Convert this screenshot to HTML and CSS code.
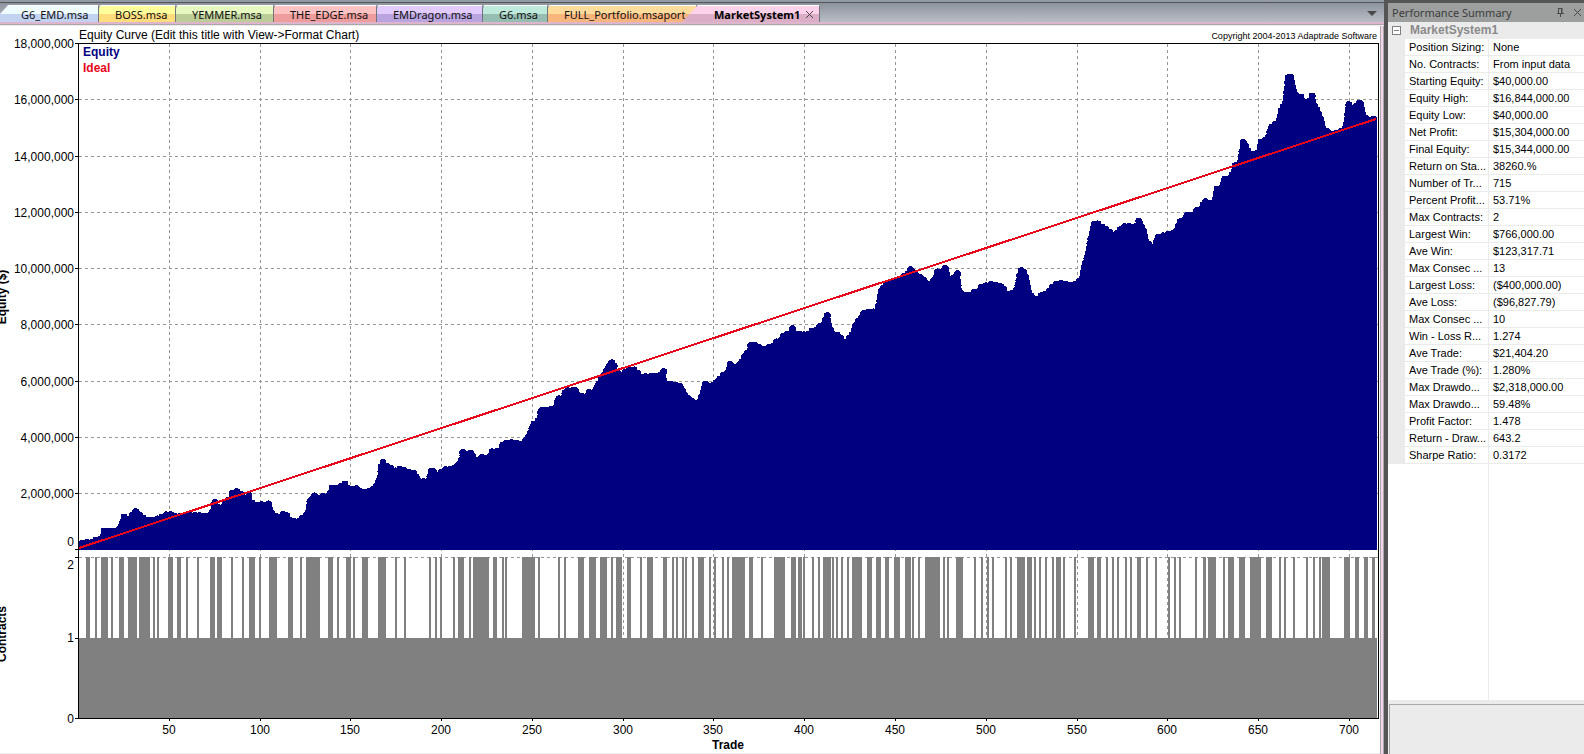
FILE: index.html
```html
<!DOCTYPE html>
<html lang="en">
<head>
    <meta charset="UTF-8">
    <meta name="viewport" content="width=device-width, initial-scale=1.0">
    <title>MarketSystem1</title>
    <link rel="stylesheet" href="styles.css">
</head>
<body>
    <div class="window">
        <main class="document">
            <nav class="tabs">
                <button class="tab blue">G6_EMD.msa</button>
                <button class="tab yellow">BOSS.msa</button>
                <button class="tab green">YEMMER.msa</button>
                <button class="tab red">THE_EDGE.msa</button>
                <button class="tab purple">EMDragon.msa</button>
                <button class="tab teal">G6.msa</button>
                <button class="tab orange">FULL_Portfolio.msaport</button>
                <div class="tab active">
                    <button class="tab-name">MarketSystem1</button>
                    <button class="icon-btn" aria-label="Close tab">
                        <svg width="9" height="9" viewBox="0 0 9 9"><path d="M1 1l7 7M8 1l-7 7"/></svg>
                    </button>
                </div>
                <button class="icon-btn tab-menu" aria-label="Tab list">
                    <svg width="10" height="5" viewBox="0 0 10 5"><path class="solid" d="M0 0h10l-5 5z"/></svg>
                </button>
            </nav>
            <svg class="chart" id="chart" viewBox="0 26 1380 728">
                <text class="label" x="79" y="39">Equity Curve (Edit this title with View-&gt;Format Chart)</text>
                <text class="copyright end" x="1377" y="39">Copyright 2004-2013 Adaptrade Software</text>
                <g id="grid"></g>
                <g id="bars" class="bars"></g>
                <path id="equity" class="equity"/>
                <path id="bumps" class="bumps"/>
                <path class="ideal" d="M79 548L1376 119"/>
                <path class="axis" d="M75 43.500H1378.500V718.500M78.500 43V719M75 718.500H1379"/>
                <g id="labels" class="label"></g>
                <text class="legend legend-equity" x="83" y="56">Equity</text>
                <text class="legend legend-ideal" x="83" y="72">Ideal</text>
                <text class="legend middle" x="728" y="749">Trade</text>
                <text class="legend middle" transform="translate(6 297) rotate(-90)">Equity ($)</text>
                <text class="legend middle" transform="translate(6 634) rotate(-90)">Contracts</text>
                <path class="bottom-line" d="M0 753.500H1380"/>
            </svg>
        </main>
        <aside class="summary">
            <header class="summary-title">
                <h1>Performance Summary</h1>
                <button class="icon-btn" aria-label="Pin">
                    <svg width="9" height="9" viewBox="0 0 9 9"><path d="M2.500 0v5M2 .5h4M6 0v5M5.500 0v5M1 5.500h7M4.500 6v3"/></svg>
                </button>
                <button class="icon-btn" aria-label="Close">
                    <svg width="9" height="9" viewBox="0 0 9 9"><path d="M1 1l7 7M8 1l-7 7"/></svg>
                </button>
            </header>
            <div class="summary-body">
                <div class="group">
                    <button class="icon-btn toggle" aria-label="Collapse">
                        <svg width="9" height="9" viewBox="0 0 9 9"><rect x=".5" y=".5" width="8" height="8"/><path d="M2 4.500h5"/></svg>
                    </button>
                    <h2>MarketSystem1</h2>
                </div>
                <table>
                    <tbody>
                        <tr><th scope="row">Position Sizing:</th><td>None</td></tr>
                        <tr><th scope="row">No. Contracts:</th><td>From input data</td></tr>
                        <tr><th scope="row">Starting Equity:</th><td>$40,000.00</td></tr>
                        <tr><th scope="row">Equity High:</th><td>$16,844,000.00</td></tr>
                        <tr><th scope="row">Equity Low:</th><td>$40,000.00</td></tr>
                        <tr><th scope="row">Net Profit:</th><td>$15,304,000.00</td></tr>
                        <tr><th scope="row">Final Equity:</th><td>$15,344,000.00</td></tr>
                        <tr><th scope="row">Return on Sta...</th><td>38260.%</td></tr>
                        <tr><th scope="row">Number of Tr...</th><td>715</td></tr>
                        <tr><th scope="row">Percent Profit...</th><td>53.71%</td></tr>
                        <tr><th scope="row">Max Contracts:</th><td>2</td></tr>
                        <tr><th scope="row">Largest Win:</th><td>$766,000.00</td></tr>
                        <tr><th scope="row">Ave Win:</th><td>$123,317.71</td></tr>
                        <tr><th scope="row">Max Consec ...</th><td>13</td></tr>
                        <tr><th scope="row">Largest Loss:</th><td>($400,000.00)</td></tr>
                        <tr><th scope="row">Ave Loss:</th><td>($96,827.79)</td></tr>
                        <tr><th scope="row">Max Consec ...</th><td>10</td></tr>
                        <tr><th scope="row">Win - Loss R...</th><td>1.274</td></tr>
                        <tr><th scope="row">Ave Trade:</th><td>$21,404.20</td></tr>
                        <tr><th scope="row">Ave Trade (%):</th><td>1.280%</td></tr>
                        <tr><th scope="row">Max Drawdo...</th><td>$2,318,000.00</td></tr>
                        <tr><th scope="row">Max Drawdo...</th><td>59.48%</td></tr>
                        <tr><th scope="row">Profit Factor:</th><td>1.478</td></tr>
                        <tr><th scope="row">Return - Draw...</th><td>643.2</td></tr>
                        <tr><th scope="row">Sharpe Ratio:</th><td>0.3172</td></tr>
                    </tbody>
                </table>
                <div class="empty"></div>
            </div>
            <div class="description"></div>
        </aside>
    </div>
    <script src="script.js"></script>
</body>
</html>
```
FILE: styles.css
```css
* {
    box-sizing: border-box;
}

body {
    margin: 0;
    overflow: hidden;
    background: #fff;
    font-family: "Liberation Sans", Arial, sans-serif;
}

button {
    margin: 0;
    padding: 0;
    border: none;
    background: none;
    color: inherit;
    font: inherit;
    cursor: pointer;
}

.window {
    display: flex;
    height: 100vh;
    overflow: hidden;
}

/* document area */
.document {
    flex: 1;
    min-width: 0;
    display: flex;
    flex-direction: column;
    box-shadow: inset -1px 0 #a8a8a8, inset -3px 0 #f5d5ee, inset -4px 0 #a8a8a8;
    padding-right: 4px;
    background: #fff;
}

.tabs {
    display: flex;
    flex: none;
    height: 26px;
    margin-right: -4px;
    padding-top: 3px;
    border-top: 2px solid #919ba5;
    background: linear-gradient(#555 0 1px, #8d939d 1px, #b9bec6 20px, #ddb6cd 20px 22px, #a8a8a8 22px 23px, #f0e8ee 23px);
    font-family: "Noto Sans", "Open Sans", sans-serif;
    font-size: 11px;
    line-height: 15px;
    color: #111;
}

.tab {
    flex: none;
    height: 17px;
    padding-left: 16px;
    border-left: 1px solid #70757c;
    border-top: 1px solid #fff;
    border-top-left-radius: 4px;
    text-align: left;
    white-space: nowrap;
}

.blue {
    width: 98px;
    padding-left: 21px;
    border-left: none;
    background: linear-gradient(#eefbff 50%, #c2d2f0 50%);
    clip-path: polygon(8px 0, 100% 0, 100% 100%, 0 100%, 0 9px);
}

.yellow {
    width: 77px;
    background: linear-gradient(#ffff9c 50%, #ffdc7c 50%);
}

.green {
    width: 98px;
    background: linear-gradient(#e6f8c0 50%, #bccd98 50%);
}

.red {
    width: 103px;
    background: linear-gradient(#ffc2c2 50%, #ee9c9c 50%);
}

.purple {
    width: 106px;
    background: linear-gradient(#e2ccff 50%, #b9a4e0 50%);
}

.teal {
    width: 65px;
    background: linear-gradient(#bdeadb 50%, #96bdb1 50%);
}

.orange {
    width: 149px;
    background: linear-gradient(#ffdb9c 50%, #f8b57c 50%);
}

.active {
    display: flex;
    align-items: center;
    justify-content: space-between;
    width: 138px;
    margin-left: -14px;
    padding: 0 5px 0 32px;
    border-left: none;
    border-right: 1px solid #70757c;
    background: linear-gradient(#ffd2ec 50%, #dbaec6 50%);
    clip-path: polygon(16px 0, 100% 0, 100% 100%, 0 100%);
    color: #000;
}

.tab-name {
    font-weight: bold;
}

.icon-btn {
    display: flex;
    align-items: center;
    flex: none;
}

.icon-btn svg {
    fill: none;
    stroke: #4a4a4a;
}

.icon-btn .solid {
    fill: #4a4a4a;
    stroke: none;
}

.tab-menu {
    height: 17px;
    margin-left: auto;
    margin-right: 7px;
}

/* chart */
.chart {
    display: block;
    width: 100%;
    flex: none;
    font-size: 12px;
    fill: #000;
}

.chart path,
.bars rect {
    shape-rendering: crispEdges;
}

.end {
    text-anchor: end;
}

.middle {
    text-anchor: middle;
}

.copyright {
    font-size: 9px;
}

.legend {
    font-weight: bold;
}

.legend-equity {
    fill: #000080;
}

.legend-ideal {
    fill: #e8061b;
}

.gridline {
    stroke: #969696;
    stroke-dasharray: 3 3;
}

.axis,
.tick {
    fill: none;
    stroke: #000;
}

.bars {
    fill: #808080;
}

.equity {
    fill: #000080;
}

.bumps {
    fill: none;
    stroke: #000080;
    stroke-width: 7;
    stroke-linecap: round;
    stroke-dasharray: 0 5;
}

.ideal {
    stroke: #e8061b;
    stroke-width: 2;
}

.bottom-line {
    stroke: #ebebeb;
}

/* performance summary */
.summary {
    display: flex;
    flex-direction: column;
    flex: none;
    width: 200px;
    border-left: 4px solid #555;
    background: #ebebeb;
    font-size: 11px;
    color: #000;
}

.summary-title {
    display: flex;
    align-items: center;
    gap: 8px;
    flex: none;
    height: 22px;
    padding: 0 2px 0 4px;
    border-top: 3px solid #555;
    background: #9c9f9e;
    font-family: "Noto Sans", "Open Sans", sans-serif;
}

.summary-title h1 {
    flex: 1;
    margin: 0;
    font-size: 11px;
    font-weight: normal;
    line-height: 15px;
    color: #3c3c3c;
}

.summary-body {
    flex: 1;
    min-height: 0;
    display: flex;
    flex-direction: column;
}

.group {
    display: flex;
    align-items: center;
    gap: 9px;
    flex: none;
    height: 17px;
    padding-left: 4px;
}

.toggle svg {
    fill: #fff;
    stroke: #808080;
}

.group h2 {
    margin: 0;
    font-size: 12px;
    line-height: 15px;
    color: #8a8a8a;
}

table {
    width: 100%;
    border-collapse: separate;
    border-spacing: 0;
    table-layout: fixed;
}

th,
td {
    height: 17px;
    padding: 0 0 0 4px;
    border-bottom: 1px solid #ebebeb;
    background: #fff;
    font-weight: normal;
    line-height: 16px;
    text-align: left;
    white-space: nowrap;
}

th {
    width: 101px;
    border-left: 17px solid #ebebeb;
    border-right: 1px solid #ebebeb;
}

.empty {
    flex: 1;
    background: linear-gradient(#ebebeb, #ebebeb) 100px 0 / 1px 100% no-repeat #fff;
}

.description {
    flex: none;
    height: 50px;
    margin: 4px 0 0 1px;
    border-top: 1px solid #a8a8a8;
    border-left: 1px solid #a8a8a8;
}
```
FILE: script.js
```js
// top outline of the equity area, as x,y pairs
const equity = [
    79,540, 82,539, 92,539, 96,536, 100,537, 101,529, 105,527, 110,528, 116,528, 119,523, 121,515, 123,514,
    128,516, 131,511, 135,508, 140,510, 143,514, 148,517, 152,517, 158,515, 163,513, 168,510, 173,512, 177,514,
    183,512, 197,512, 208,513, 211,508, 212,501, 215,500, 218,505, 222,505, 223,499, 229,497, 230,490, 235,488,
    241,489, 245,495, 247,496, 248,493, 251,493, 252,498, 255,502, 263,501, 267,502, 270,500, 272,503, 273,510,
    278,515, 284,510, 289,513, 292,518, 297,519, 301,515, 305,513, 307,498, 310,497, 313,492, 318,495, 323,493,
    327,494, 330,485, 337,485, 343,481, 347,481, 350,487, 358,485, 363,490, 368,488, 373,486, 377,477, 378,465,
    382,459, 388,463, 397,468, 401,465, 406,468, 415,470, 419,475, 421,479, 426,479, 428,470, 432,466, 436,469,
    437,475, 441,467, 452,466, 457,462, 461,451, 463,449, 468,452, 472,449, 475,453, 477,459, 480,454, 487,456,
    490,449, 499,448, 501,441, 510,439, 522,441, 527,433, 530,423, 537,418, 538,407, 544,408, 554,405, 555,397,
    562,395, 563,388, 573,387, 577,386, 580,393, 585,394, 588,389, 592,390, 597,380, 602,372, 608,361, 613,359,
    617,362, 618,371, 622,373, 624,368, 633,366, 638,368, 642,374, 650,373, 658,373, 663,368, 666,371, 667,382,
    673,381, 683,384, 687,393, 693,398, 696,402, 700,392, 703,381, 708,385, 712,382, 717,377, 722,372, 726,371,
    727,363, 730,361, 735,366, 739,360, 743,352, 747,350, 748,343, 754,341, 763,346, 772,343, 775,338, 779,338,
    782,332, 789,331, 792,325, 795,330, 807,332, 810,328, 816,327, 817,324, 822,322, 823,316, 827,312, 830,315,
    832,325, 835,332, 842,333, 844,341, 848,335, 851,330, 853,322, 858,317, 863,309, 875,309, 877,298, 878,287,
    882,286, 883,283, 888,280, 897,277, 905,272, 908,267, 911,265, 914,268, 918,273, 925,276, 929,283, 933,276,
    936,268, 941,271, 942,266, 946,264, 949,268, 950,276, 954,277, 955,271, 959,271, 961,280, 962,291, 969,293,
    972,289, 977,289, 980,284, 991,281, 1000,283, 1006,285, 1007,293, 1013,290, 1015,283, 1017,271, 1022,266,
    1027,271, 1030,280, 1032,292, 1036,298, 1040,292, 1045,291, 1052,282, 1060,280, 1073,282, 1079,278, 1081,265,
    1085,253, 1087,240, 1090,227, 1092,221, 1097,219, 1102,223, 1110,228, 1114,233, 1118,227, 1126,222, 1135,225,
    1136,219, 1139,217, 1143,222, 1147,230, 1149,241, 1153,246, 1155,235, 1168,231, 1173,231, 1177,220, 1183,217,
    1186,211, 1193,213, 1194,208, 1200,206, 1203,198, 1212,202, 1214,187, 1220,186, 1222,177, 1228,176, 1232,168,
    1233,162, 1237,164, 1238,153, 1241,143, 1244,139, 1249,145, 1252,152, 1256,152, 1258,140, 1265,137, 1268,126,
    1277,118, 1278,108, 1282,103, 1284,87, 1285,75, 1289,72, 1294,76, 1296,88, 1298,93, 1303,94, 1306,100,
    1308,100, 1310,93, 1315,94, 1316,102, 1321,110, 1324,118, 1326,127, 1332,131, 1342,128, 1344,118, 1345,105,
    1349,101, 1353,105, 1357,102, 1360,98, 1364,103, 1366,113, 1370,118, 1374,117, 1376,115
];

// start,end of every stretch traded with 2 contracts
const doubles = [
    86,90, 95,97, 101,108, 111,113, 119,124, 128,137, 139,150, 153,155, 157,159, 168,173, 177,181, 186,188,
    197,199, 210,215, 217,222, 231,233, 242,244, 249,255, 259,261, 269,277, 288,293, 300,302, 306,320, 328,333,
    337,339, 346,351, 353,355, 362,368, 378,386, 395,397, 404,406, 429,431, 435,437, 440,442, 453,455, 458,464,
    469,471, 473,489, 493,497, 502,504, 505,507, 522,535, 538,540, 558,560, 564,566, 578,584, 589,596, 600,607,
    611,613, 616,622, 627,631, 640,642, 647,653, 663,667, 672,674, 676,678, 682,684, 685,687, 692,694, 698,704,
    709,711, 714,716, 722,724, 727,729, 732,745, 749,753, 761,763, 774,785, 791,796, 798,802, 803,805, 812,814,
    818,820, 823,831, 832,834, 836,838, 841,843, 847,849, 852,862, 867,872, 876,881, 885,889, 894,900, 905,911,
    912,914, 918,920, 925,940, 943,945, 947,949, 956,963, 974,976, 981,983, 987,989, 992,994, 1005,1007,
    1010,1012, 1017,1025, 1027,1032, 1034,1036, 1039,1041, 1045,1047, 1052,1054, 1056,1061, 1063,1065,
    1074,1076, 1088,1094, 1097,1101, 1106,1108, 1112,1114, 1117,1119, 1125,1127, 1130,1132, 1137,1141,
    1146,1148, 1155,1157, 1168,1170, 1174,1176, 1179,1181, 1195,1197, 1203,1206, 1208,1216, 1223,1225,
    1228,1234, 1239,1245, 1250,1261, 1266,1272, 1279,1281, 1284,1286, 1293,1295, 1306,1308, 1313,1315,
    1319,1321, 1322,1330, 1344,1350, 1355,1359, 1364,1368, 1372,1375
];

const grid = document.getElementById('grid');
const labels = document.getElementById('labels');

function add(parent, name, attrs, text) {
    const el = document.createElementNS('http://www.w3.org/2000/svg', name);
    for (const key in attrs) el.setAttribute(key, attrs[key]);
    if (text) el.textContent = text;
    parent.appendChild(el);
}

// y axis: one line and label per 2,000,000
[549, 493, 437, 381, 324, 268, 212, 156, 99, 43].forEach((y, i) => {
    if (i > 0 && i < 9) add(grid, 'path', { class: 'gridline', d: `M79 ${y + 0.5}H1378` });
    add(grid, 'path', { class: 'tick', d: `M75 ${y + 0.5}H78` });
    add(labels, 'text', { class: 'end', x: 74, y: i ? y + 5 : 546 }, (i * 2000000).toLocaleString('en-US'));
});

// contracts axis
add(grid, 'path', { class: 'gridline', d: 'M79 557.5H1378' });
add(grid, 'path', { class: 'tick', d: 'M75 557.5H78M75 638.5H78' });
add(labels, 'text', { class: 'end', x: 74, y: 569 }, '2');
add(labels, 'text', { class: 'end', x: 74, y: 642 }, '1');
add(labels, 'text', { class: 'end', x: 74, y: 723 }, '0');

// x axis: every 50 trades
[169, 260, 350, 441, 532, 623, 713, 804, 895, 986, 1077, 1167, 1258, 1349].forEach((x, i) => {
    add(grid, 'path', { class: 'gridline', d: `M${x + 0.5} 44V718` });
    add(grid, 'path', { class: 'tick', d: `M${x + 0.5} 719V721` });
    add(labels, 'text', { class: 'middle', x: x, y: 734 }, String((i + 1) * 50));
});

const bars = document.getElementById('bars');
add(bars, 'rect', { x: 79, y: 638, width: 1298, height: 80 });
for (let i = 0; i < doubles.length; i += 2) {
    add(bars, 'rect', { x: doubles[i], y: 557, width: doubles[i + 1] - doubles[i], height: 81 });
}

// the markers are round, so their centres lie one radius inside the outline
const radius = 3.5;
const last = equity.length - 2;
let line = '';
for (let i = 0; i <= last; i += 2) {
    const prev = Math.max(i - 2, 0);
    const next = Math.min(i + 2, last);
    const dx = equity[next] - equity[prev];
    const dy = equity[next + 1] - equity[prev + 1];
    const len = Math.hypot(dx, dy);
    const x = Math.min(Math.max(equity[i] - dy / len * radius, 79 + radius), 1377 - radius);
    const y = equity[i + 1] + dx / len * radius;
    line += `${i ? 'L' : 'M'}${x.toFixed(1)} ${y.toFixed(1)}`;
}
document.getElementById('equity').setAttribute('d', line + 'L1377 118V550H79V544Z');
document.getElementById('bumps').setAttribute('d', line);
```
